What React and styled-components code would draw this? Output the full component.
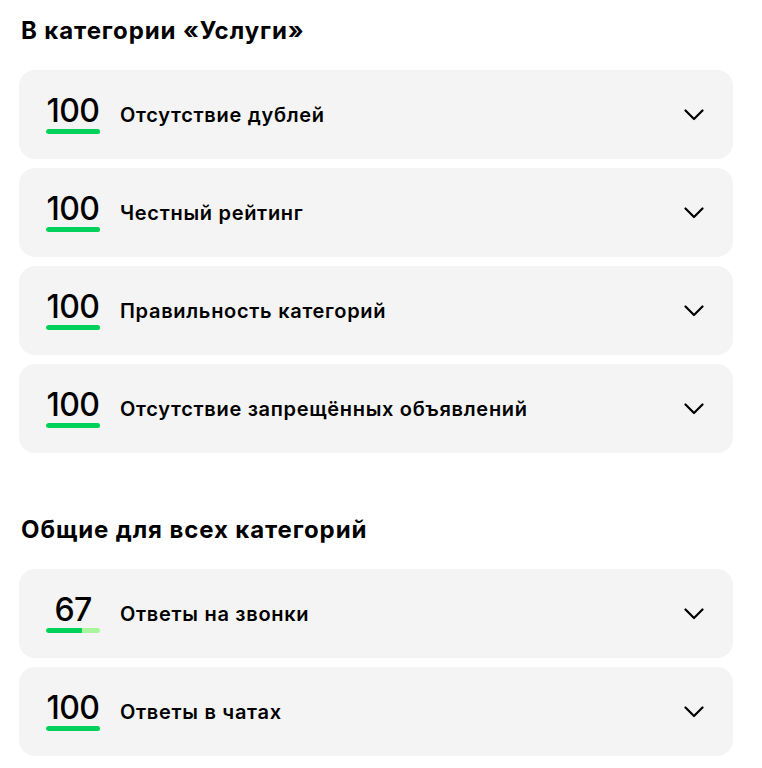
import React from "react";
import styled, { createGlobalStyle } from "styled-components";

const Global = createGlobalStyle`
  html, body { margin: 0; padding: 0; background: #ffffff; }
  body { font-family: Inter, "Noto Sans", "Liberation Sans", sans-serif; color: #000; }
`;

const Page = styled.div`
  width: 714px;
  margin-left: 19px;
  padding-top: 16px;
  padding-bottom: 12px;
`;

const Section = styled.section`
  display: flex;
  flex-direction: column;
  gap: 9px;
  & + & { margin-top: 62px; }
`;

const Title = styled.h2`
  margin: 0 0 16px 2px;
  font-size: 24px;
  font-weight: 700;
  line-height: 29px;
  letter-spacing: 0.9px;
`;

const Card = styled.div`
  display: flex;
  align-items: center;
  height: 89px;
  padding: 0 29px 0 27px;
  box-sizing: border-box;
  background: #f4f4f4;
  border-radius: 16px;
`;

const Score = styled.div`
  display: flex;
  flex-direction: column;
  min-width: 54px;
  margin-right: 20px;
`;

const Num = styled.div`
  font-size: 32px;
  line-height: 32px;
  font-weight: 500;
  text-align: center;
  letter-spacing: -0.6px;
`;

const Bar = styled.div`
  margin-top: 2px;
  height: 5px;
  border-radius: 3px;
  background: #a8f59e;
  overflow: hidden;
  display: flex;
`;

const Fill = styled.div`
  height: 100%;
  background: #02d15c;
  border-radius: 3px 0 0 3px;
`;

const Label = styled.div`
  flex: 1;
  font-size: 20px;
  font-weight: 600;
  letter-spacing: 0.7px;
`;

const Chevron = () => (
  <svg width="20" height="12" viewBox="0 0 20 12" fill="none">
    <path d="M1.5 1.5 L10 10 L18.5 1.5" stroke="#000" strokeWidth="2.2" strokeLinecap="round" strokeLinejoin="round" />
  </svg>
);

const Row = ({ score, label }) => (
  <Card>
    <Score>
      <Num>{score}</Num>
      <Bar>
        <Fill style={{ width: `${score}%` }} />
      </Bar>
    </Score>
    <Label>{label}</Label>
    <Chevron />
  </Card>
);

export default function App() {
  return (
    <>
      <Global />
      <Page>
        <Section>
          <Title>В категории «Услуги»</Title>
          <Row score={100} label="Отсутствие дублей" />
          <Row score={100} label="Честный рейтинг" />
          <Row score={100} label="Правильность категорий" />
          <Row score={100} label="Отсутствие запрещённых объявлений" />
        </Section>
        <Section>
          <Title>Общие для всех категорий</Title>
          <Row score={67} label="Ответы на звонки" />
          <Row score={100} label="Ответы в чатах" />
        </Section>
      </Page>
    </>
  );
}
